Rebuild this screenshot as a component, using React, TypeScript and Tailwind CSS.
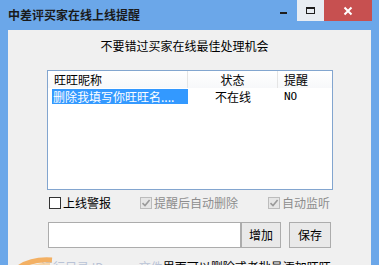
import React from "react";

const cjk = { fontFamily: '"Noto Sans CJK SC", "Microsoft YaHei", sans-serif' };

function Check({ checked, disabled, label, className = "" }: { checked?: boolean; disabled?: boolean; label: string; className?: string }) {
  return (
    <div className={"flex items-center " + className}>
      <div
        className={
          "w-[12px] h-[12px] border flex items-center justify-center " +
          (disabled ? "border-[#bcbcbc] bg-[#e6e6e6]" : "border-[#333333] bg-white")
        }
      >
        {checked && (
          <svg width="10" height="10" viewBox="0 0 10 10">
            <path d="M1.5 5.2 L4 7.6 L8.6 2" stroke={disabled ? "#9a9a9a" : "#222"} strokeWidth="1.6" fill="none" />
          </svg>
        )}
      </div>
      <span className={"ml-[2px] text-[12px] leading-[14px] " + (disabled ? "text-[#8d8d8d]" : "text-black")}>{label}</span>
    </div>
  );
}

export default function App() {
  return (
    <div className="w-[379px] h-[265px] overflow-hidden bg-[#6ba7e9] flex flex-col relative" style={cjk}>
      {/* Title bar */}
      <div className="h-[30px] flex items-start shrink-0">
        <div className="pl-[8px] pt-[8px] text-[12px] leading-[14px] font-bold text-[#1a1a1a]">中差评买家在线上线提醒</div>
        <div className="ml-auto flex mr-[7px]">
          <div className="w-[26px] h-[21px] flex items-start justify-start">
            <div className="mt-[12px] ml-[9px] w-[7px] h-[2px] bg-[#1e1e1e]" />
          </div>
          <div className="w-[27px] h-[21px] bg-[#e8edf3] flex items-center justify-center">
            <div className="w-[9px] h-[7px] border border-[#1e1e1e] border-t-2 -mt-[1px]" />
          </div>
          <div className="w-[48px] h-[21px] bg-[#c75050] flex items-center justify-center">
            <svg width="10" height="10" viewBox="0 0 10 10">
              <path d="M1.5 1.5 L8.5 8.5 M8.5 1.5 L1.5 8.5" stroke="white" strokeWidth="2" />
            </svg>
          </div>
        </div>
      </div>

      {/* Client area */}
      <div className="mx-[8px] flex-1 bg-[#f0f0f0] flex flex-col">
        <div className="pt-[9px] text-center text-[12px] leading-[14px] text-black pr-[10px]">不要错过买家在线最佳处理机会</div>

        {/* List */}
        <div className="ml-[39px] mt-[17px] w-[286px] h-[120px] border border-[#82a5cf] bg-white flex flex-col">
          <div className="h-[17px] flex text-[12px] leading-[17px] text-black bg-gradient-to-b from-white to-[#f7f8fa]">
            <div className="w-[140px] pl-[6px] border-r border-[#e5e5e5]">旺旺昵称</div>
            <div className="w-[90px] text-center border-r border-[#e5e5e5]">状态</div>
            <div className="flex-1 pl-[6px]">提醒</div>
          </div>
          <div className="h-[15px] mt-[1px] flex text-[12px] leading-[15px]">
            <div className="w-[140px] pl-[4px]">
              <div className="w-[136px] bg-[#3399ff] text-white pl-[1px] whitespace-nowrap overflow-hidden">删除我填写你旺旺名....</div>
            </div>
            <div className="w-[90px] text-center text-black">不在线</div>
            <div className="flex-1 pl-[6px] text-black text-[11px]" style={{ fontFamily: '"DejaVu Sans Mono", monospace' }}>NO</div>
          </div>
        </div>

        {/* Checkboxes */}
        <div className="mt-[7px] flex items-center h-[12px]">
          <Check label="上线警报" className="ml-[41px]" />
          <Check label="提醒后自动删除" checked disabled className="ml-[29px]" />
          <Check label="自动监听" checked disabled className="ml-[30px]" />
        </div>

        {/* Input row */}
        <div className="mt-[13px] flex h-[26px]">
          <div className="ml-[40px] w-[193px] h-[26px] border border-[#acacac] bg-white" />
          <div className="w-[40px] h-[26px] border border-[#acacac] bg-[#e9e9e9] text-[12px] flex items-center justify-center text-black">增加</div>
          <div className="ml-[8px] w-[42px] h-[26px] border border-[#acacac] bg-[#e9e9e9] text-[12px] flex items-center justify-center text-black">保存</div>
        </div>

        {/* Bottom marquee */}
        <div className="mt-[12px] flex items-start relative h-[20px]">
          <svg width="60" height="20" viewBox="0 0 60 20" className="absolute left-[-2px] top-[-6px]">
            <path d="M4 22 Q 18 4 46 6" stroke="#f3a54a" strokeWidth="5" fill="none" opacity="0.85" />
            <path d="M10 22 Q 22 10 44 10" stroke="#f8c98a" strokeWidth="3" fill="none" opacity="0.7" />
          </svg>
          <div className="ml-[33px] text-[12px] leading-[14px] whitespace-nowrap">
            <span className="text-[#b9c3d6]">运行目录 ID.mwm文件</span>
            <span className="text-black">里面可以删除或者批量添加旺旺</span>
          </div>
        </div>
      </div>
    </div>
  );
}
